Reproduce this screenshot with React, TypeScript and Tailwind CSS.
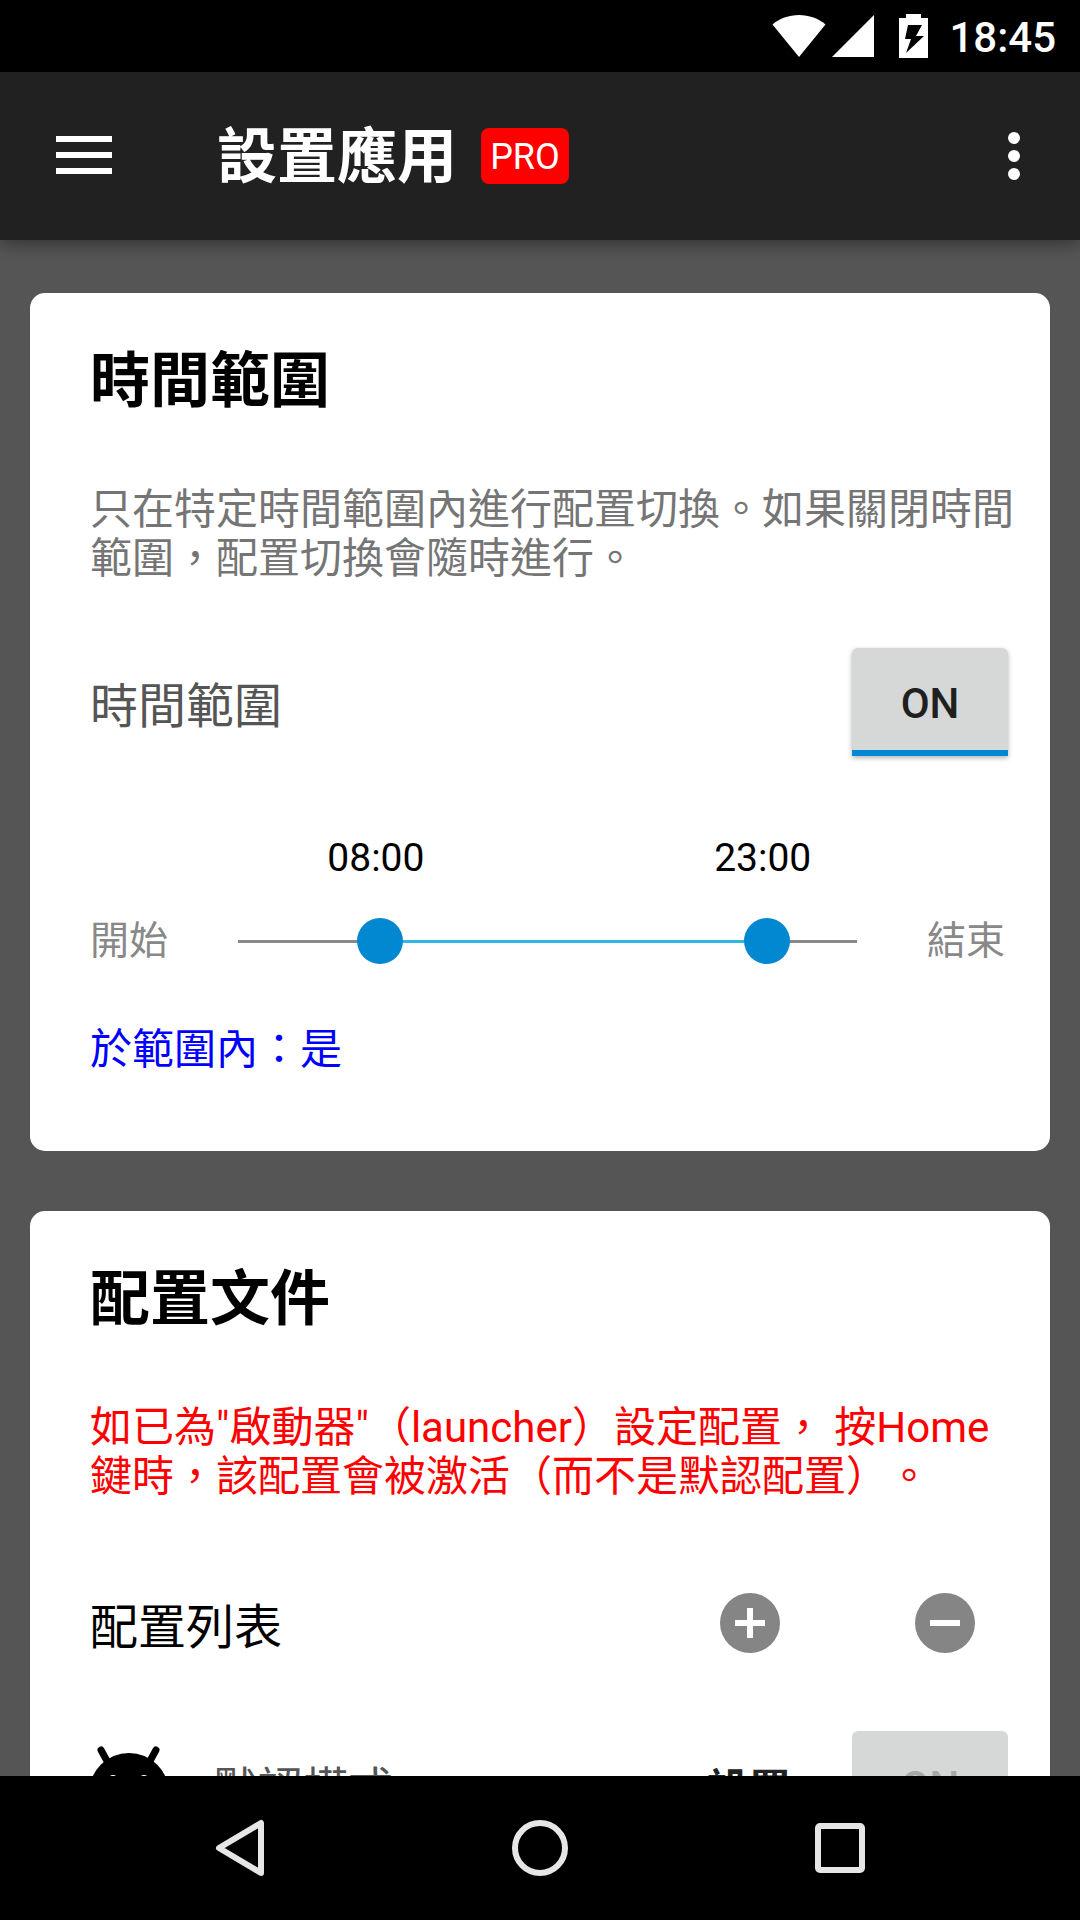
import React, { useState } from "react";
import { clsx } from "clsx";

// The slider covers one day, it starts at 02:30 and ends at 02:30 the day after
const DAY_START = 2.5;
const DAY_END = 26.5;

const formatHour = (value: number) => {
  const hours = Math.floor(value) % 24;
  const minutes = (value % 1) * 60;
  return `${String(hours).padStart(2, "0")}:${String(minutes).padStart(2, "0")}`;
};

const toPercent = (value: number) =>
  ((value - DAY_START) / (DAY_END - DAY_START)) * 100;

const StatusBar = () => (
  <div className="flex h-18 shrink-0 items-center justify-end bg-black pr-6 text-white">
    <svg className="mr-1.5 h-[42px] w-[54px]" viewBox="0 0 54 42" fill="currentColor">
      <path d="M27 42 0.5 9.5C7.500 3.500 17 0 27 0s19.500 3.500 26.500 9.500z" />
    </svg>
    <svg className="mr-[25px] h-[42px] w-[42px]" viewBox="0 0 42 42" fill="currentColor">
      <path d="M42 0v42H0z" />
    </svg>
    <svg className="mr-[21px] h-11 w-[29px]" viewBox="0 0 29 44">
      <path d="M7 0h15v4h7v40H0V4h7z" fill="#fff" />
      <path d="M9 11h14l-6 11h8L7 39l5-14H6z" fill="#000" />
    </svg>
    <span className="pt-1 text-[42px] leading-[48px] font-medium">18:45</span>
  </div>
);

const AppBar = () => (
  <header className="z-10 flex h-42 shrink-0 items-center bg-[#212121] pr-15 pl-14 text-white shadow-[0_4px_16px_rgba(0,0,0,0.4)]">
    <button type="button" aria-label="Menu">
      <svg className="block h-10 w-14" viewBox="0 0 56 40" fill="currentColor">
        <path d="M0 0h56v6H0zM0 16h56v6H0zM0 32h56v6H0z" />
      </svg>
    </button>
    <h1 className="ml-[105px] pt-1 text-[60px] leading-[72px] font-bold">設置應用</h1>
    <span className="ml-6 flex h-14 w-[88px] items-center justify-center rounded-lg bg-[#ff0000] pt-0.5 text-[36px] leading-[48px]">
      PRO
    </span>
    <button type="button" aria-label="More options" className="ml-auto">
      <svg className="block h-12 w-3" viewBox="0 0 12 48" fill="currentColor">
        <circle cx="6" cy="6" r="6" />
        <circle cx="6" cy="24" r="6" />
        <circle cx="6" cy="42" r="6" />
      </svg>
    </button>
  </header>
);

type CardProps = {
  title: string;
  description: string;
  descriptionClassName: string;
  children: React.ReactNode;
};

const Card = ({ title, description, descriptionClassName, children }: CardProps) => (
  <section className="shrink-0 rounded-[15px] bg-white pt-[53px] pr-[30px] pb-[77px] pl-15">
    <h2 className="text-[60px] leading-[72px] font-bold text-black">{title}</h2>
    <p className={clsx("mt-[67px] text-[42px] leading-[49px]", descriptionClassName)}>
      {description}
    </p>
    {children}
  </section>
);

type ToggleButtonProps = {
  label: string;
  on: boolean;
  disabled?: boolean;
  onToggle?: () => void;
};

const ToggleButton = ({ label, on, disabled, onToggle }: ToggleButtonProps) => (
  <button
    type="button"
    aria-label={label}
    aria-pressed={on}
    disabled={disabled}
    onClick={onToggle}
    className={clsx(
      "h-[108px] w-[156px] shrink-0 rounded-t-md border-b-6 bg-[#d6d7d7] pt-2.5 text-[42px] leading-[48px] font-medium",
      on ? "border-[#0288d1]" : "border-[#b0b1b1]",
      disabled ? "text-[#a6a7a7]" : "text-[#1f1f1f] shadow-[0_2px_5px_rgba(0,0,0,0.3)]"
    )}
  >
    {on ? "ON" : "OFF"}
  </button>
);

type ThumbProps = {
  label: string;
  value: number;
  onChange: (value: number) => void;
};

const Thumb = ({ label, value, onChange }: ThumbProps) => (
  <input
    type="range"
    aria-label={label}
    min={DAY_START}
    max={DAY_END}
    step={0.5}
    value={value}
    onChange={(e) => onChange(Number(e.target.value))}
    className="pointer-events-none absolute inset-y-0 -left-[23px] h-[46px] w-[calc(100%+46px)] appearance-none bg-transparent [&::-webkit-slider-thumb]:pointer-events-auto [&::-webkit-slider-thumb]:size-[46px] [&::-webkit-slider-thumb]:appearance-none [&::-webkit-slider-thumb]:rounded-full [&::-webkit-slider-thumb]:bg-[#0288d1]"
  />
);

const TimeRange = () => {
  const [start, setStart] = useState(8);
  const [end, setEnd] = useState(23);

  return (
    <div className="mt-[78px] flex items-end pr-[15px] text-[39px] leading-[46px] text-[#888888]">
      <span>開始</span>
      <div className="mx-[70px] flex-1">
        <div className="relative h-12 text-[39px] leading-[48px] text-black">
          {[start, end].map((value, i) => (
            <output
              key={i}
              className="absolute top-0 -ml-1 -translate-x-1/2"
              style={{ left: `${toPercent(value)}%` }}
            >
              {formatHour(value)}
            </output>
          ))}
        </div>
        <div className="relative mt-9 flex h-[46px] items-center">
          <div className="h-[3px] w-full bg-[#888888]">
            <div
              className="h-full bg-[#33b5e5]"
              style={{
                marginLeft: `${toPercent(start)}%`,
                width: `${toPercent(end) - toPercent(start)}%`,
              }}
            ></div>
          </div>
          <Thumb label="開始" value={start} onChange={(v) => setStart(Math.min(v, end))} />
          <Thumb label="結束" value={end} onChange={(v) => setEnd(Math.max(v, start))} />
        </div>
      </div>
      <span>結束</span>
    </div>
  );
};

const AndroidHead = () => (
  <svg className="h-20 w-[78px] shrink-0" viewBox="0 0 78 80">
    <path d="M11 5l6 11M66 5l-6 11" stroke="#000" strokeWidth="7" strokeLinecap="round" />
    <path d="M-1 48a40 40 0 0 1 80 0v32H-1z" fill="#000" />
    <circle cx="23" cy="34" r="4" fill="#fff" />
    <circle cx="54" cy="34" r="4" fill="#fff" />
  </svg>
);

const ProfileList = () => (
  <>
    <div className="mt-[92px] flex h-15 items-center gap-[135px] pr-[45px]">
      <h3 className="mr-auto pt-2.5 text-[48px] leading-[56px] text-black">配置列表</h3>
      <button type="button" aria-label="Add">
        <svg className="block size-15" viewBox="0 0 60 60">
          <circle cx="30" cy="30" r="30" fill="#858585" />
          <path d="M15 30h30M30 15v30" stroke="#fff" strokeWidth="6" />
        </svg>
      </button>
      <button type="button" aria-label="Remove">
        <svg className="block size-15" viewBox="0 0 60 60">
          <circle cx="30" cy="30" r="30" fill="#858585" />
          <path d="M15 30h30" stroke="#fff" strokeWidth="6" />
        </svg>
      </button>
    </div>
    <div className="mt-[78px] flex items-center pr-3">
      <AndroidHead />
      <span className="ml-[45px] pt-2.5 text-[45px] leading-[56px] text-[#555555]">默認模式</span>
      <button
        type="button"
        className="mr-[61px] ml-auto pt-2.5 text-[42px] leading-[48px] font-bold text-[#212121]"
      >
        設置
      </button>
      <ToggleButton label="默認模式" on disabled />
    </div>
  </>
);

const NavigationBar = () => (
  <nav className="z-10 grid h-36 shrink-0 grid-cols-3 items-center justify-items-center bg-black px-[90px] text-[#e6e6e6]">
    <button type="button" aria-label="Back">
      <svg className="block size-15" viewBox="0 0 60 60" fill="none" stroke="currentColor" strokeWidth="6" strokeLinejoin="round">
        <path d="M51 5v50L9 30z" />
      </svg>
    </button>
    <button type="button" aria-label="Home">
      <svg className="block size-15" viewBox="0 0 60 60" fill="none" stroke="currentColor" strokeWidth="6">
        <circle cx="30" cy="30" r="25" />
      </svg>
    </button>
    <button type="button" aria-label="Recents">
      <svg className="block size-15" viewBox="0 0 60 60" fill="none" stroke="currentColor" strokeWidth="6">
        <rect x="8" y="8" width="44" height="44" rx="2" />
      </svg>
    </button>
  </nav>
);

const App = () => {
  const [enabled, setEnabled] = useState(true);

  return (
    <div
      lang="zh-Hant"
      className="flex h-screen flex-col bg-[#555555] font-['Roboto','Noto_Sans_CJK_TC',sans-serif] [text-spacing-trim:space-all]"
    >
      <StatusBar />
      <AppBar />
      <main className="flex min-h-0 flex-1 flex-col gap-15 overflow-hidden px-[30px] pt-[53px]">
        <Card
          title="時間範圍"
          description="只在特定時間範圍內進行配置切換。如果關閉時間範圍，配置切換會隨時進行。"
          descriptionClassName="text-[#757575]"
        >
          <div className="mt-[65px] flex items-center justify-between pr-3">
            <span className="pt-2.5 text-[48px] leading-[56px] text-[#555555]">時間範圍</span>
            <ToggleButton label="時間範圍" on={enabled} onToggle={() => setEnabled(!enabled)} />
          </div>
          <TimeRange />
          <p className="mt-[61px] text-[42px] leading-[49px] text-[#0000ff]">於範圍內：是</p>
        </Card>
        <Card
          title="配置文件"
          description={'如已為"啟動器"（launcher）設定配置， 按Home鍵時，該配置會被激活（而不是默認配置）。'}
          descriptionClassName="text-[#ff0000]"
        >
          <ProfileList />
        </Card>
      </main>
      <NavigationBar />
    </div>
  );
};

export default App;
